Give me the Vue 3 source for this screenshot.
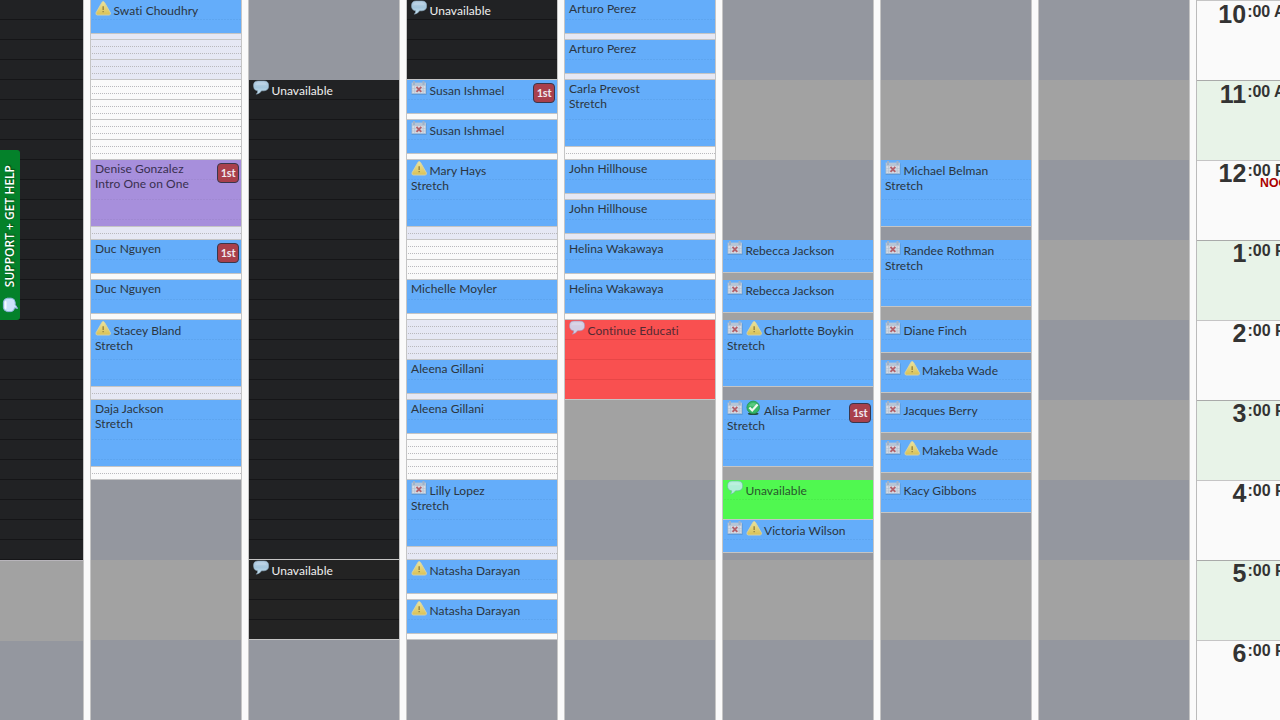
<script setup>
const gap = (h) => ({ kind: 'gap', h })
const open = (h) => ({ kind: 'open', h })
const soft = (h) => ({ kind: 'soft', h })
const appt = (h, name, o = {}) => ({ kind: 'appt', h, name, ...o })
const cal = ['cal']
const warn = ['warn']
const both = ['cal', 'warn']
const S = 'Stretch'

const source = [
  [{ kind: 'dark', h: 560, plain: true }],
  [
    appt(34, 'Swati Choudhry', { icons: warn }), soft(46), open(80),
    { kind: 'intro', h: 67, name: 'Denise Gonzalez', sub: 'Intro One on One', first: true }, soft(13),
    appt(34, 'Duc Nguyen', { first: true }), open(6),
    appt(34, 'Duc Nguyen'), open(6),
    appt(67, 'Stacey Bland', { icons: warn, sub: S }), soft(13),
    appt(67, 'Daja Jackson', { sub: S }), open(13),
  ],
  [
    gap(80),
    { kind: 'dark', h: 480, name: 'Unavailable', icons: ['chat'] },
    { kind: 'dark', h: 80, name: 'Unavailable', icons: ['chat'], late: true },
  ],
  [
    { kind: 'dark', h: 80, name: 'Unavailable', icons: ['chat'] },
    appt(34, 'Susan Ishmael', { icons: cal, first: true }), open(6),
    appt(34, 'Susan Ishmael', { icons: cal }), open(6),
    appt(67, 'Mary Hays', { icons: warn, sub: S }), soft(13), open(40),
    appt(34, 'Michelle Moyler'), open(6), soft(40),
    appt(34, 'Aleena Gillani'), soft(6),
    appt(34, 'Aleena Gillani'), open(46),
    appt(67, 'Lilly Lopez', { icons: cal, sub: S }), soft(13),
    appt(34, 'Natasha Darayan', { icons: warn }), open(6),
    appt(34, 'Natasha Darayan', { icons: warn }), open(6),
  ],
  [
    appt(34, 'Arturo Perez'), soft(6),
    appt(34, 'Arturo Perez'), soft(6),
    appt(67, 'Carla Prevost', { sub: S }), open(13),
    appt(34, 'John Hillhouse'), soft(6),
    appt(34, 'John Hillhouse'), soft(6),
    appt(34, 'Helina Wakawaya'), open(6),
    appt(34, 'Helina Wakawaya'), open(6),
    { kind: 'red', h: 80, name: 'Continue Educati', icons: ['chat'] },
  ],
  [
    gap(240),
    appt(33, 'Rebecca Jackson', { icons: cal }), gap(7),
    appt(33, 'Rebecca Jackson', { icons: cal }), gap(7),
    appt(67, 'Charlotte Boykin', { icons: both, sub: S }), gap(13),
    appt(67, 'Alisa Parmer', { icons: ['cal', 'ok'], sub: S, first: true }), gap(13),
    { kind: 'green', h: 40, name: 'Unavailable', icons: ['chat'] },
    appt(33, 'Victoria Wilson', { icons: both }),
  ],
  [
    gap(160),
    appt(67, 'Michael Belman', { icons: cal, sub: S }), gap(13),
    appt(67, 'Randee Rothman', { icons: cal, sub: S }), gap(13),
    appt(33, 'Diane Finch', { icons: cal }), gap(7),
    appt(33, 'Makeba Wade', { icons: both }), gap(7),
    appt(33, 'Jacques Berry', { icons: cal }), gap(7),
    appt(33, 'Makeba Wade', { icons: both }), gap(7),
    appt(33, 'Kacy Gibbons', { icons: cal }),
  ],
  [],
]

const columns = source.map((list) => {
  let y = 0
  return list.map((s) => {
    const seg = { ...s, shift: y % 20 }
    y += s.h
    return seg
  })
})

const hours = [
  ['10', 'AM'], ['11', 'AM'], ['12', 'PM'], ['1', 'PM'], ['2', 'PM'],
  ['3', 'PM'], ['4', 'PM'], ['5', 'PM'], ['6', 'PM'],
]
</script>

<template>
  <svg class="defs" width="0" height="0" aria-hidden="true">
    <defs>
      <linearGradient id="g-warn" x1="0" y1="0" x2="0" y2="1">
        <stop offset="0" stop-color="#ece49c" /><stop offset="1" stop-color="#d9c155" />
      </linearGradient>
      <linearGradient id="g-chat" x1="0" y1="0" x2="0" y2="1">
        <stop offset="0" stop-color="#b4cde2" /><stop offset=".5" stop-color="#a5c6dc" /><stop offset="1" stop-color="#c8e4f4" />
      </linearGradient>
      <symbol id="i-warn" viewBox="0 0 16 16">
        <path d="M8.2 1.5 Q9 1.5 9.6 2.6 L15.4 12.8 Q15.8 14.9 14.2 15 H2.2 Q.6 14.9 1 12.8 L6.8 2.6 Q7.4 1.5 8.2 1.5Z" fill="url(#g-warn)" stroke="#d5d3a8" stroke-width=".9" />
        <path d="M7.4 6.2h1.6v3.8H7.4zM7.4 10.9h1.6v1.3H7.4z" fill="#a08e48" />
      </symbol>
      <symbol id="i-cal" viewBox="0 0 16 16">
        <path d="M.6 3.4h15V14.8H.6z" fill="#4f83b8" opacity=".55" />
        <path d="M.6 2.6h14.4v11.2H.6z" fill="#b7c5d5" />
        <path d="M1.4 6h12.8v7H1.4z" fill="#d6dce5" />
        <path d="M1 8.6h14M1 11h14M3.6 6v7M12.2 6v7" stroke="#b0bdcc" stroke-width=".6" />
        <path d="M2 1h2v4H2zM11.5 1h2v4h-2z" fill="#9fb2c8" />
        <path d="M5.5 6.8l4.8 5M10.3 6.8L5.5 11.8" stroke="#b4606a" stroke-width="1.8" />
      </symbol>
      <symbol id="i-ok" viewBox="0 0 16 16">
        <ellipse cx="7.2" cy="13.7" rx="5.4" ry="1.3" fill="#244d40" />
        <circle cx="7.2" cy="7.4" r="6.3" fill="#35b866" stroke="#289454" stroke-width=".8" />
        <path d="M2.4 5.5Q7.1.2 12 5.5Q7.2 7.5 2.4 5.5Z" fill="#73d391" opacity=".6" />
        <path d="M3.4 7.6l2.8 2.9 5.4-6" fill="none" stroke="#f1f7ef" stroke-width="2.2" />
      </symbol>
    </defs>
  </svg>

  <main class="schedule">
    <section v-for="(col, c) in columns" :key="c" class="column" :class="{ lead: c === 0 }">
      <article
        v-for="(s, i) in col"
        :key="i"
        class="seg"
        :class="[s.kind, { late: s.late, plain: s.plain }]"
        :style="{ height: s.h + 'px', '--shift': -s.shift + 'px' }"
      >
        <div v-if="s.name" class="who" :class="{ tall: s.icons }">
          <template v-for="ic in s.icons || []" :key="ic">
            <svg v-if="ic === 'chat'" class="icon" :class="'chat-' + s.kind" viewBox="0 0 16 16">
              <path class="bubble" d="M5 1H11Q15.7 1 15.7 5.8Q15.7 10.4 11 10.8H8.6Q6.8 13.8 3.4 14.2Q5 12.3 4.6 10.8Q.5 10.2 .5 5.8Q.5 1 5 1Z" />
              <path class="shine" d="M4.8 2.5H11Q13.5 3 13.8 5.3H2.2Q2.4 3 4.8 2.5Z" />
            </svg>
            <svg v-else class="icon" viewBox="0 0 16 16"><use :href="'#i-' + ic" /></svg>
          </template>
          <span>{{ s.name }}</span>
        </div>
        <div v-if="s.sub" class="kind-label">{{ s.sub }}</div>
        <b v-if="s.first" class="badge">1st</b>
      </article>
    </section>

    <aside class="times">
      <div v-for="([h, m], i) in hours" :key="h" class="hour" :class="{ pm: m === 'PM', alt: i % 2 }">
        <div class="clock"><b>{{ h }}</b><span>:00 {{ m }}</span></div>
        <div v-if="h === '12'" class="noon">NOON</div>
      </div>
    </aside>
  </main>

  <div class="support">
    <span>SUPPORT + GET HELP</span>
    <svg viewBox="0 0 16 16" width="16" height="16">
      <path d="M5.4 1.2H9.2Q13 1.6 13.2 5.4V7.6L15.6 11.4L12.6 10.8Q12 14.2 9.2 14.6H5.4Q1.6 14 1.4 10.6V5.2Q1.6 1.6 5.4 1.2Z" fill="#cce2fb" stroke="#8fb6df" stroke-width="1" />
      <path d="M3.6 5V11" stroke="#f6fbff" stroke-width="1.8" stroke-linecap="round" />
    </svg>
  </div>
</template>

<style>
html, body { margin: 0; overflow: hidden; background: #fafafa; }
</style>

<style scoped>
.defs { position: absolute; }
.schedule {
  display: flex;
  gap: 6px;
  width: 1280px;
  height: 720px;
  overflow: hidden;
  background: #fafafa;
  font: 12px/15px Lato, sans-serif;
  font-variant-ligatures: none;
}
.column {
  box-sizing: border-box;
  flex: 0 0 152px;
  height: 720px;
  border: solid #c5c5c5;
  border-width: 0 1px;
  background: repeating-linear-gradient(#94979f 0 80px, #a2a2a2 80px 160px);
  letter-spacing: 0.06px;
}
.column.lead { flex-basis: 84px; border-left: 0; background-position: 0 1px; }
.seg {
  position: relative;
  box-sizing: border-box;
  overflow: hidden;
  padding: 1px 4px 0;
  color: #2b3540;
  white-space: nowrap;
}
.appt, .intro, .red, .green, .dark { border-bottom: 1px solid #c5c5c5; }
.open, .soft {
  background:
    repeating-linear-gradient(90deg, var(--fill) 0 1px, transparent 1px 2px),
    repeating-linear-gradient(transparent 0 6px, #b9b9bd 6px 7px, transparent 7px 13px, #b9b9bd 13px 14px, transparent 14px 20px);
  background-position: 0 0, 0 var(--shift);
  background-size: auto, 100% 20px;
  background-color: var(--fill);
}
.open { --fill: #fafafa; }
.soft { --fill: #e6e8f4; }
.open::after, .soft::after {
  content: '';
  position: absolute;
  inset: 0;
  background: linear-gradient(transparent 19px, #c5c5c5 19px) 0 var(--shift) / 100% 20px;
}
.appt, .intro, .green {
  background:
    repeating-linear-gradient(90deg, var(--fill) 0 1px, transparent 1px 3px),
    linear-gradient(transparent 19px, var(--rule) 19px) 0 var(--shift) / 100% 20px;
  background-color: var(--fill);
}
.appt { --fill: #64adfa; --rule: #5da5f0; }
.intro { --fill: #a78fdc; --rule: #a089d3; color: #392f50; }
.green { --fill: #50f850; --rule: #4aee4a; color: #29542d; }
.red { background: #f95050 linear-gradient(transparent 19px, #e84646 19px) 0 0 / 100% 20px; color: #532a33; }
.dark { background: #212224 linear-gradient(transparent 19px, #151517 19px) 0 0 / 100% 20px; color: #f0f0f0; }
.dark.late { background-color: #232323; }
.dark.plain { border-bottom: 0; box-shadow: 0 1px #b8b5bb; }
.who { display: flex; gap: 2.5px; height: 15px; }
.who.tall { height: 17px; }
.who.tall span { padding-top: 2px; }
.icon { flex: none; width: 16px; height: 16px; margin-top: -1px; }
.bubble { fill: url(#g-chat); stroke: #8ea9bd; stroke-width: .6; }
.shine { fill: #fff; opacity: .16; }
.chat-red .bubble { fill: #d2cce2; stroke: #a591b5; }
.chat-green .bubble { fill: #b0eed8; stroke: #68b9a0; }
.badge {
  position: absolute;
  top: 3px;
  right: 2px;
  box-sizing: border-box;
  width: 22px;
  height: 20px;
  border: 1px solid #38374d;
  border-radius: 4px;
  background: #a9404c;
  color: #f0e8ee;
  font-size: 11px;
  line-height: 18px;
  letter-spacing: -0.3px;
  text-align: center;
}
.times {
  flex: 0 0 103px;
  border-left: 1px solid #bbb;
  font-family: "Liberation Sans", Arial, sans-serif;
  font-weight: bold;
  color: #333;
}
.hour {
  box-sizing: border-box;
  height: 80px;
  border-top: 1px solid #c5c5c5;
  background: #fafafa;
  padding: 1px 1px 0 0;
  text-align: right;
}
.hour.alt { border-top-color: #aaa; background: #e8f3e8; }
.hour.pm { padding-top: 0; }
.clock { display: flex; justify-content: flex-end; align-items: flex-start; height: 25px; white-space: nowrap; }
.clock b { margin-right: 1px; font-size: 25px; line-height: 25px; }
.clock span { padding-top: 1px; font-size: 16px; line-height: 18px; }
.noon { margin-top: -9px; padding-right: 2px; color: #a00; font-size: 12.3px; line-height: 12px; }
.support {
  position: absolute;
  left: 0;
  top: 150px;
  display: flex;
  flex-direction: column;
  align-items: center;
  justify-content: space-between;
  box-sizing: border-box;
  width: 20px;
  height: 170px;
  padding: 15px 1px 7px 0;
  border-radius: 0 3px 3px 0;
  background: #04812a;
  color: #fff;
  font: 600 12px/18px "Open Sans", sans-serif;
}
.support span { writing-mode: vertical-rl; transform: rotate(180deg); white-space: nowrap; text-shadow: 1px 1px 1px #035018; }
</style>
